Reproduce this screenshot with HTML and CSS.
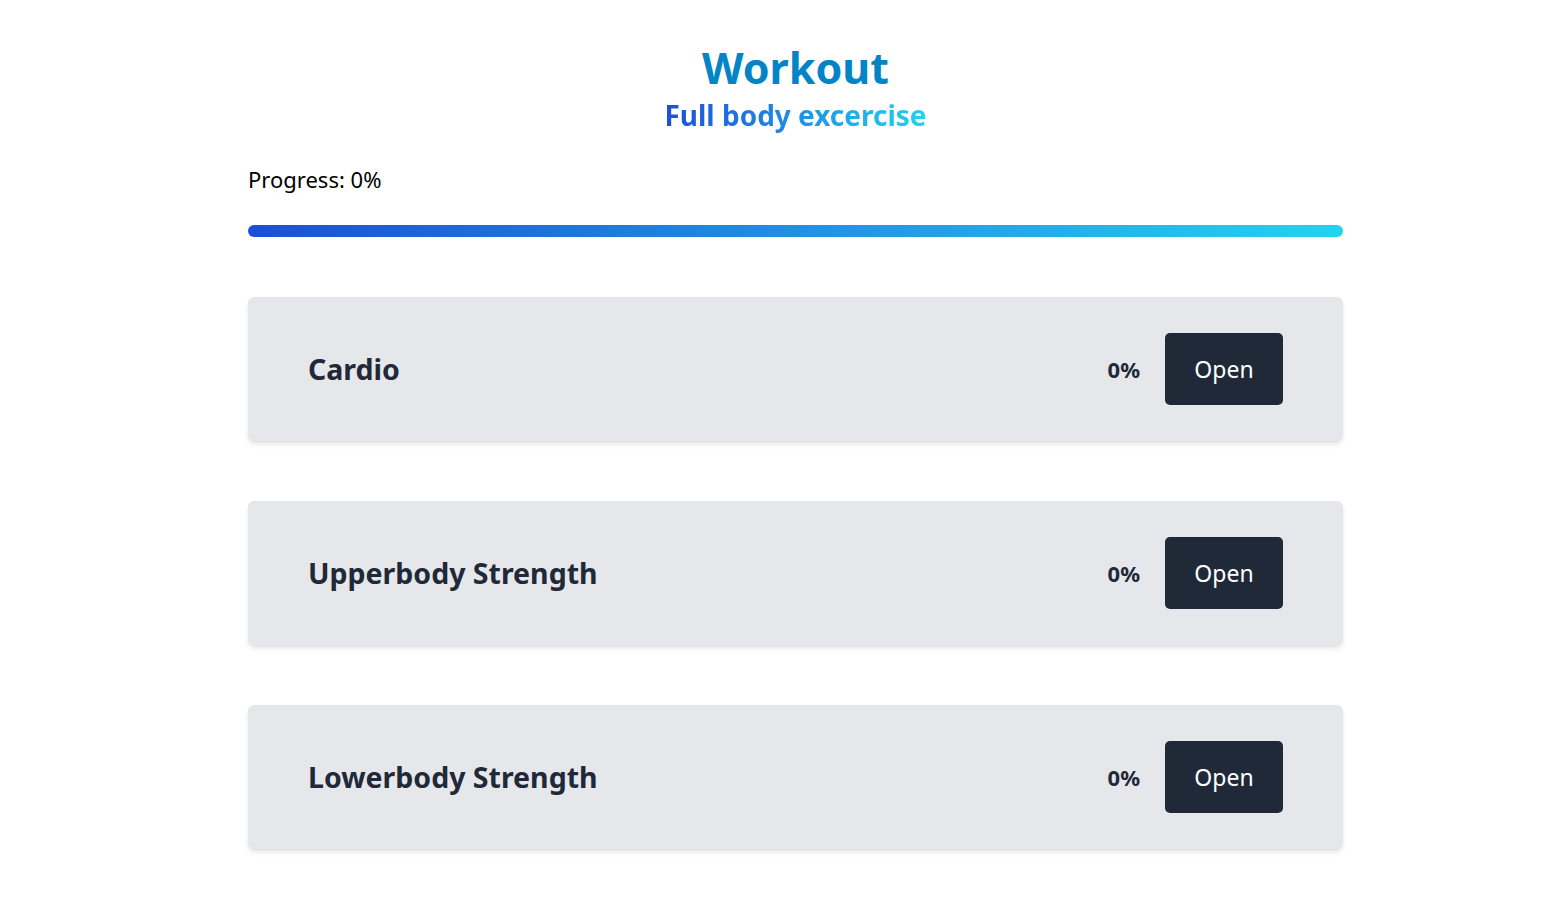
FILE: index.html
```html
<!DOCTYPE html>
<html>
<head>
<meta charset="utf-8">
<link rel="stylesheet" href="styles.css">
</head>
<body>
<main class="page">
  <header class="header">
    <h1 class="title">Workout</h1>
    <h2 class="subtitle">Full body excercise</h2>
  </header>
  <p class="progress-label">Progress: 0%</p>
  <div class="progress-bar"></div>
  <section class="list">
    <div class="card">
      <span class="card-title">Cardio</span>
      <div class="card-right">
        <span class="pct">0%</span>
        <button class="btn">Open</button>
      </div>
    </div>
    <div class="card">
      <span class="card-title">Upperbody Strength</span>
      <div class="card-right">
        <span class="pct">0%</span>
        <button class="btn">Open</button>
      </div>
    </div>
    <div class="card">
      <span class="card-title">Lowerbody Strength</span>
      <div class="card-right">
        <span class="pct">0%</span>
        <button class="btn">Open</button>
      </div>
    </div>
  </section>
</main>
</body>
</html>
```

FILE: styles.css
```css
html, body {
  margin: 0;
  padding: 0;
  background: #ffffff;
}
body {
  font-family: "Noto Sans", "Open Sans", sans-serif;
  color: #000;
}
.page {
  width: 1095px;
  margin-left: 248px;
  padding-top: 40px;
  padding-bottom: 50px;
}
.header {
  display: flex;
  flex-direction: column;
  align-items: center;
}
.title {
  margin: 0;
  font-size: 43px;
  line-height: 56px;
  font-weight: 700;
  color: #0284c7;
}
.subtitle {
  margin: 0;
  font-size: 28px;
  line-height: 38px;
  font-weight: 700;
  background: linear-gradient(to right, #1d4ed8, #22d3ee);
  -webkit-background-clip: text;
  background-clip: text;
  color: transparent;
}
.progress-label {
  margin: 30px 0 0 0;
  font-size: 22px;
  line-height: 30px;
}
.progress-bar {
  margin-top: 31px;
  height: 12px;
  border-radius: 9999px;
  background: linear-gradient(to right, #1d4ed8, #22d3ee);
}
.list {
  margin-top: 60px;
  display: flex;
  flex-direction: column;
  gap: 60px;
}
.card {
  display: flex;
  align-items: center;
  justify-content: space-between;
  height: 144px;
  box-sizing: border-box;
  padding: 0 60px;
  background: #e5e7eb;
  border-radius: 6px;
  box-shadow: 0 4px 6px -1px rgba(0,0,0,0.1), 0 2px 4px -2px rgba(0,0,0,0.1);
}
.card-title {
  font-size: 28.5px;
  font-weight: 700;
  color: #1f2937;
}
.card-right {
  display: flex;
  align-items: center;
  gap: 25px;
}
.pct {
  font-size: 22px;
  font-weight: 700;
  color: #1f2937;
}
.btn {
  width: 118px;
  height: 72px;
  border: none;
  border-radius: 5px;
  background: #1f2937;
  color: #ffffff;
  font-family: "Noto Sans", "Open Sans", sans-serif;
  font-size: 23px;
  padding: 0;
}
```
